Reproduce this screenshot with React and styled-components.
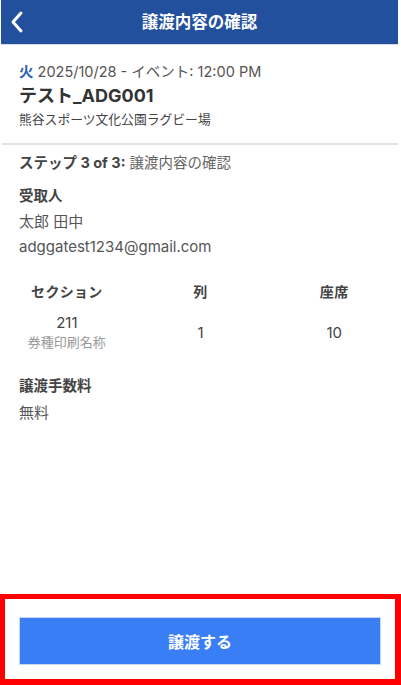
import styled, { createGlobalStyle } from "styled-components";

const GlobalStyle = createGlobalStyle`
  html, body {
    margin: 0;
    padding: 0;
    background: #fff;
    overflow: hidden;
  }
  body {
    font-family: Inter, "Noto Sans CJK JP", sans-serif;
    color: #333;
  }
`;

function App() {
  return (
    <>
      <GlobalStyle />
      <Page>
        <Header>
          <BackButton aria-label="back">
            <svg width="14" height="24" viewBox="0 0 14 24">
              <polyline
                points="11,3 3,12 11,21"
                fill="none"
                stroke="#fff"
                strokeWidth="3"
                strokeLinecap="round"
                strokeLinejoin="round"
              />
            </svg>
          </BackButton>
          <Title>譲渡内容の確認</Title>
          <span />
        </Header>

        <EventInfo>
          <DateLine>
            <Weekday>火</Weekday> 2025/10/28 - イベント: 12:00 PM
          </DateLine>
          <EventName>テスト_ADG001</EventName>
          <Venue>熊谷スポーツ文化公園ラグビー場</Venue>
        </EventInfo>
        <Divider />

        <Content>
          <Step>
            <b>ステップ 3 of 3:</b> 譲渡内容の確認
          </Step>
          <Label>受取人</Label>
          <Value $gap={6}>太郎 田中</Value>
          <Value $gap={5}>adggatest1234@gmail.com</Value>
        </Content>

        <SeatTable>
          <HeadCell>セクション</HeadCell>
          <HeadCell>列</HeadCell>
          <HeadCell>座席</HeadCell>
          <Cell>
            <span>211</span>
            <SubText>券種印刷名称</SubText>
          </Cell>
          <Cell>1</Cell>
          <Cell>10</Cell>
        </SeatTable>

        <Content>
          <Label $gap={25}>譲渡手数料</Label>
          <Value $gap={7}>無料</Value>
        </Content>

        <Spacer />

        <Footer>
          <SubmitButton>譲渡する</SubmitButton>
        </Footer>
      </Page>
    </>
  );
}

const Page = styled.div`
  min-height: 685px;
  display: flex;
  flex-direction: column;
`;

const Header = styled.header`
  height: 44px;
  margin: 0 3px 0 1px;
  background: #22509c;
  border-bottom: 1px solid #d6dbe4;
  display: grid;
  grid-template-columns: 44px 1fr 44px;
  align-items: center;
`;

const BackButton = styled.button`
  border: none;
  background: none;
  padding: 0 0 0 9px;
  display: flex;
  align-items: center;
  height: 44px;
`;

const Title = styled.h1`
  margin: 0;
  text-align: center;
  color: #fff;
  font-size: 16.5px;
  font-weight: 700;
  line-height: 44px;
`;

const EventInfo = styled.div`
  padding: 17px 19px 0;
`;

const DateLine = styled.div`
  font-size: 14.5px;
  line-height: 20px;
  color: #555;
`;

const Weekday = styled.span`
  color: #2b5fae;
  font-weight: 700;
`;

const EventName = styled.div`
  margin-top: 2px;
  font-size: 18px;
  font-weight: 700;
  line-height: 24px;
  color: #333;
`;

const Venue = styled.div`
  margin-top: 2px;
  font-size: 12.8px;
  line-height: 20px;
  color: #444;
`;

const Divider = styled.hr`
  margin: 13px 3px 0 2px;
  border: none;
  height: 2px;
  background: #e2e2e2;
`;

const Content = styled.div`
  padding: 0 19px;
`;

const Step = styled.div`
  margin-top: 8px;
  font-size: 14.5px;
  line-height: 20px;
  color: #666;
  b {
    color: #444;
    font-weight: 700;
  }
`;

const Label = styled.div`
  margin-top: ${(p) => p.$gap ?? 13}px;
  font-size: 14.5px;
  font-weight: 700;
  line-height: 20px;
  color: #444;
`;

const Value = styled.div`
  margin-top: ${(p) => p.$gap}px;
  font-size: 15px;
  line-height: 20px;
  color: #555;
`;

const SeatTable = styled.div`
  margin-top: 25px;
  display: grid;
  grid-template-columns: repeat(3, 1fr);
  row-gap: 12px;
  text-align: center;
`;

const HeadCell = styled.div`
  font-size: 14px;
  font-weight: 700;
  line-height: 20px;
  color: #444;
  letter-spacing: 0.3px;
`;

const Cell = styled.div`
  display: flex;
  flex-direction: column;
  align-items: center;
  justify-content: center;
  font-size: 15px;
  line-height: 18px;
  color: #444;
`;

const SubText = styled.span`
  margin-top: 1px;
  font-size: 13px;
  line-height: 18px;
  color: #999;
`;

const Spacer = styled.div`
  flex: 1;
`;

const Footer = styled.footer`
  height: 91px;
  box-sizing: border-box;
  border: 5px solid #ff0000;
  border-bottom-width: 6px;
  border-right-width: 6px;
  padding: 18px 14px 0;
`;

const SubmitButton = styled.button`
  width: 100%;
  height: 48px;
  border: 1px solid #c8d8f4;
  background: #397ef5;
  color: #fff;
  font-family: Inter, "Noto Sans CJK JP", sans-serif;
  font-size: 16px;
  font-weight: 700;
  cursor: pointer;
`;

export default App;
